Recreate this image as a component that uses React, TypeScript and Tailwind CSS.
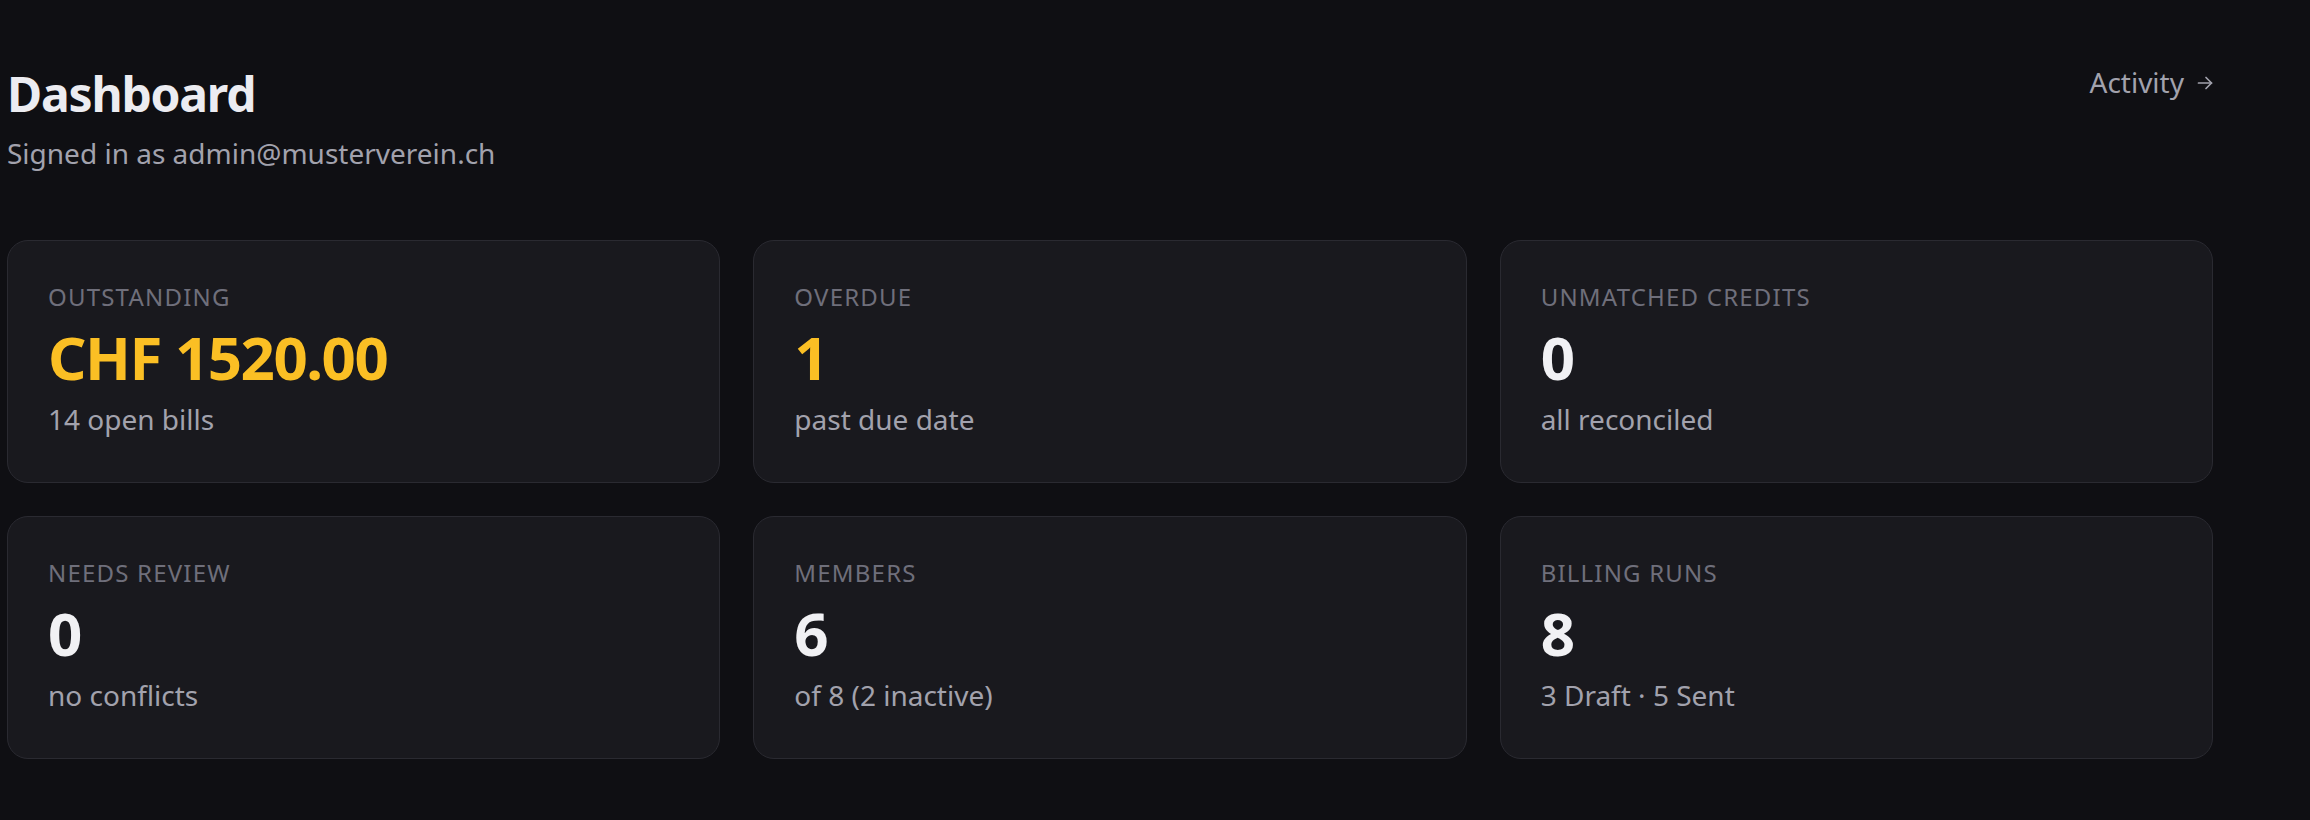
import React from "react";

type Stat = {
  label: string;
  value: string;
  sub: string;
  accent?: boolean;
};

const stats: Stat[] = [
  { label: "Outstanding", value: "CHF 1520.00", sub: "14 open bills", accent: true },
  { label: "Overdue", value: "1", sub: "past due date", accent: true },
  { label: "Unmatched credits", value: "0", sub: "all reconciled" },
  { label: "Needs review", value: "0", sub: "no conflicts" },
  { label: "Members", value: "6", sub: "of 8 (2 inactive)" },
  { label: "Billing runs", value: "8", sub: "3 Draft · 5 Sent" },
];

function StatCard({ s }: { s: Stat }) {
  return (
    <div className="flex flex-col rounded-[21px] border border-[#2a2a31] bg-[#19191e] px-[40px] pt-[40px] pb-[43px]">
      <div className="text-[24px] leading-[32px] uppercase tracking-[0.05em] text-[#6f6f7b]">
        {s.label}
      </div>
      <div
        className={
          s.accent
            ? "mt-[8px] text-[60px] leading-[72px] font-bold tracking-[-0.025em] text-[#fbbf24]"
            : "mt-[8px] text-[60px] leading-[72px] font-bold tracking-[-0.025em] text-[#f1f1f4]"
        }
      >
        {s.value}
      </div>
      <div className="mt-[6px] text-[28px] leading-[40px] text-[#a2a2ad]">{s.sub}</div>
    </div>
  );
}

export default function App() {
  return (
    <div
      className="min-h-screen w-full bg-[#0f0f13] pt-[62px] pl-[7px]"
      style={{ fontFamily: '"Noto Sans", "Open Sans", sans-serif' }}
    >
      <div className="w-[2206px]">
        <div className="flex items-start justify-between">
          <div>
            <h1 className="text-[48px] leading-[64px] font-bold tracking-[-0.025em] text-[#ececf1]">
              Dashboard
            </h1>
            <p className="mt-[7px] text-[28px] leading-[40px] text-[#a2a2ad]">
              Signed in as admin@musterverein.ch
            </p>
          </div>
          <a className="flex items-center gap-[13px] text-[28px] leading-[40px] text-[#a2a2ad]">
            <span>Activity</span>
            <svg
              width="16"
              height="16"
              viewBox="0 0 16 16"
              fill="none"
              stroke="currentColor"
              strokeWidth="1.7"
              strokeLinecap="round"
              strokeLinejoin="round"
              className="mt-[1px]"
            >
              <path d="M1.5 8H14.5" />
              <path d="M9 2.5L14.5 8L9 13.5" />
            </svg>
          </a>
        </div>
        <div className="mt-[67px] grid grid-cols-3 gap-[33px]">
          {stats.map((s) => (
            <StatCard key={s.label} s={s} />
          ))}
        </div>
      </div>
    </div>
  );
}
